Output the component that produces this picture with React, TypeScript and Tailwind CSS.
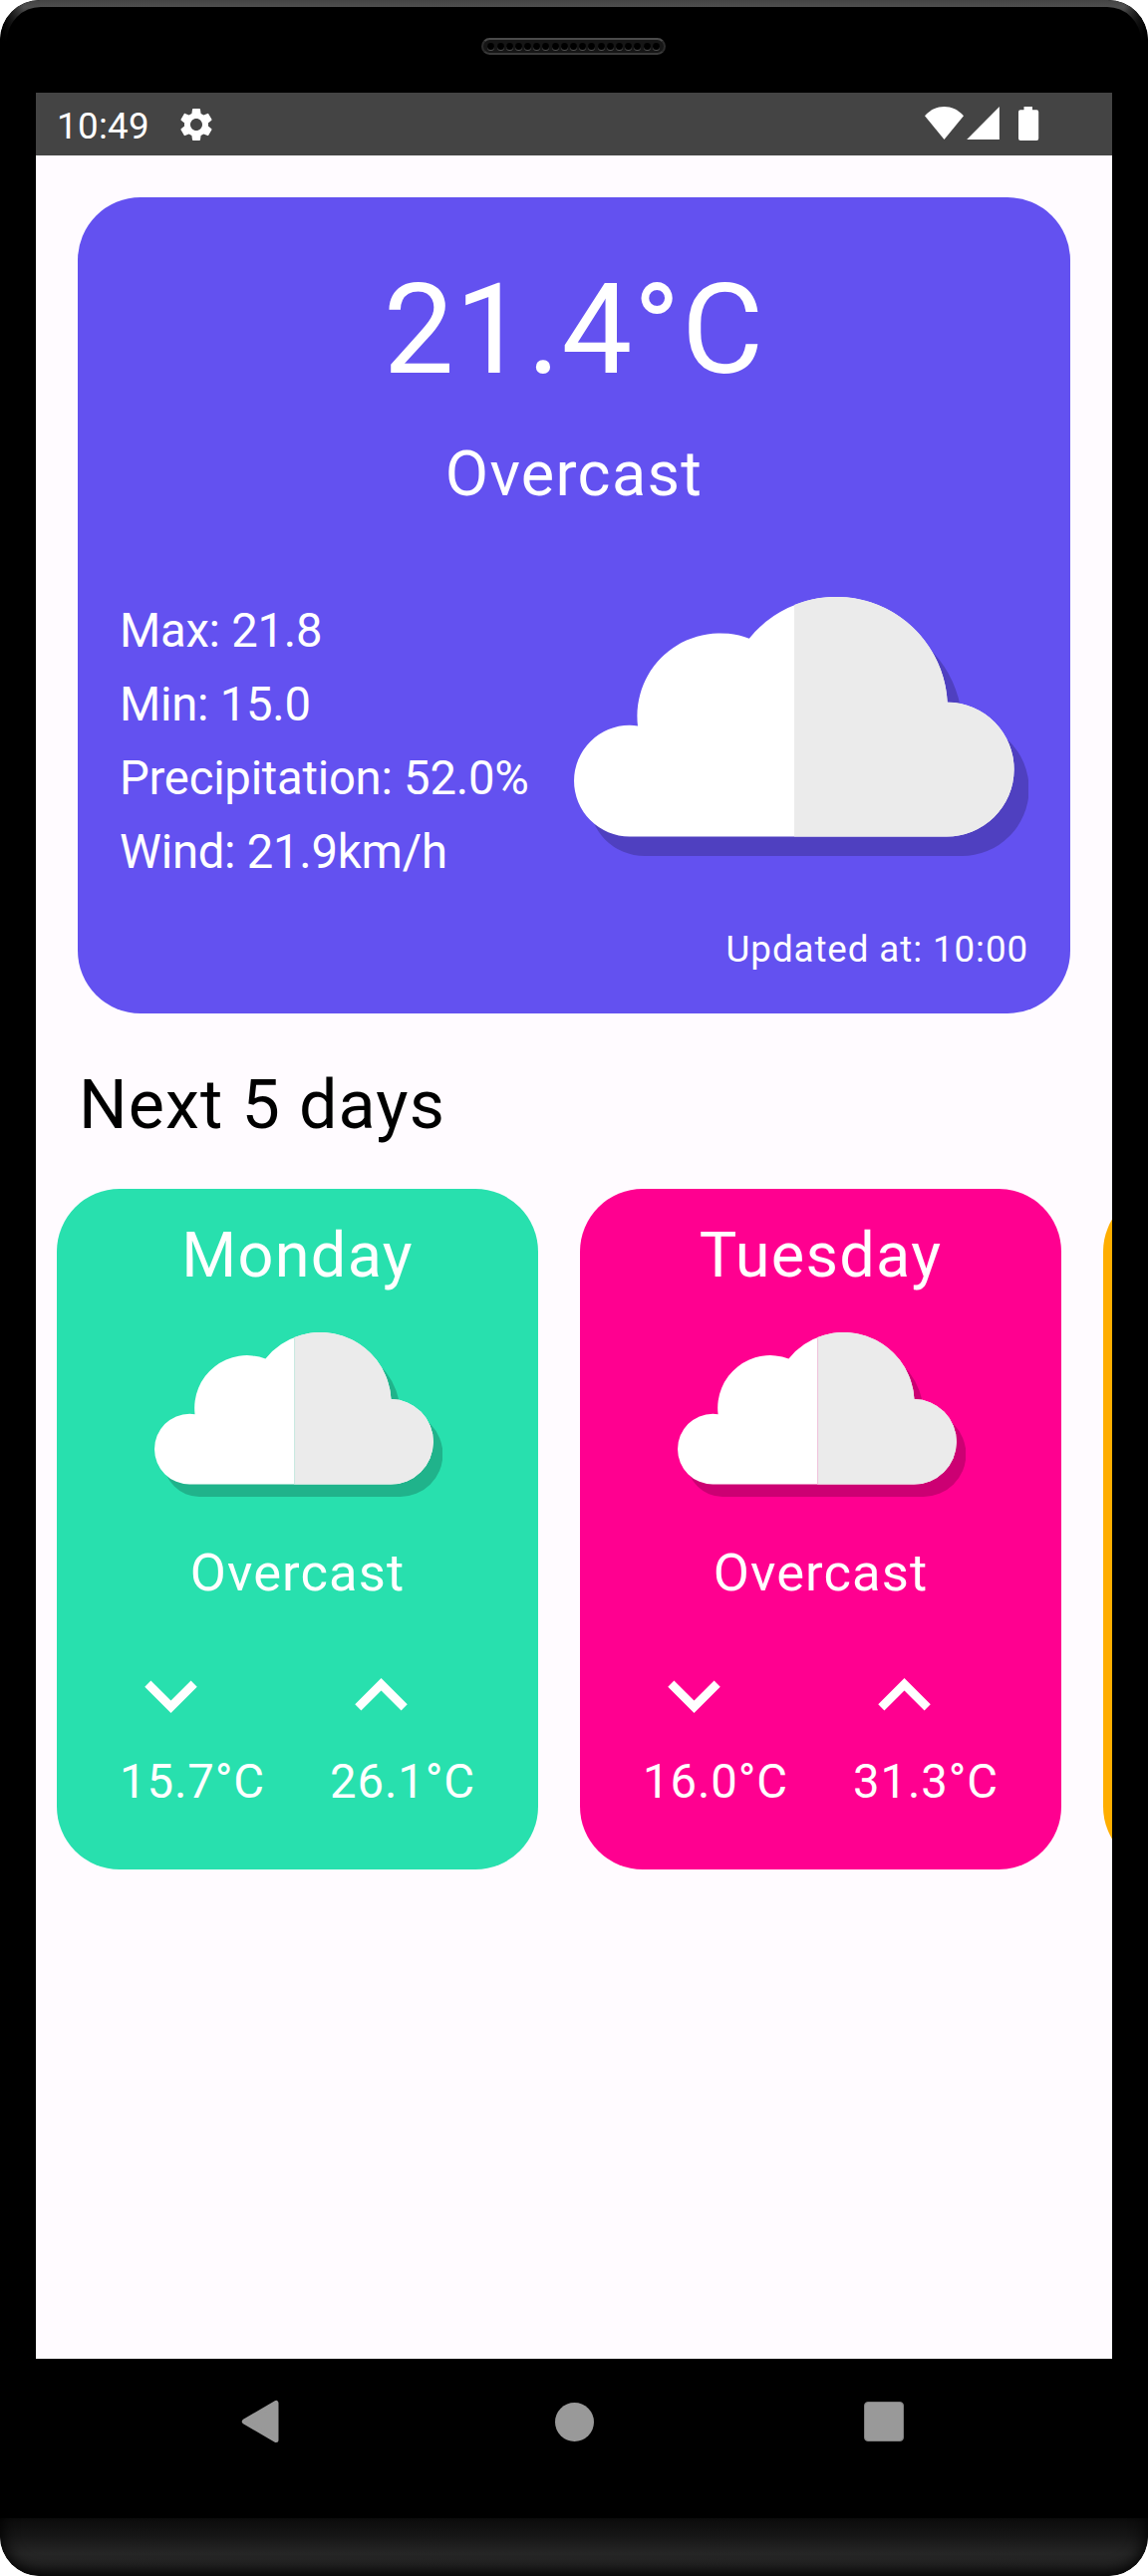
import { MdKeyboardArrowDown, MdKeyboardArrowUp, MdSettings } from "react-icons/md";

type Day = { name: string; sky: string; min: string; max: string; bg: string };

const days: Day[] = [
  { name: "Monday", sky: "Overcast", min: "15.7°C", max: "26.1°C", bg: "bg-[#28e0ae] text-[#28e0ae]" },
  { name: "Tuesday", sky: "Overcast", min: "16.0°C", max: "31.3°C", bg: "bg-[#ff0090] text-[#ff0090]" },
];

const details = ["Max: 21.8", "Min: 15.0", "Precipitation: 52.0%", "Wind: 21.9km/h"];

const CLOUD =
  "M55.8 240.4A55.8 55.8 0 0 1 55.8 128.8Q60 128.8 64 129.6A83.2 83.2 0 0 1 175.8 41.7A111.9 111.9 0 0 1 374.7 105.7A67.3 67.3 0 0 1 373.8 240.4Z";
const CLOUD_RIGHT =
  "M221 240.4V8A111.9 111.9 0 0 1 374.7 105.7A67.3 67.3 0 0 1 373.8 240.4Z";

function Cloud({ className, seam = false }: { className: string; seam?: boolean }) {
  return (
    <svg viewBox="0 0 456 260" preserveAspectRatio="none" className={className}>
      <path d={CLOUD} transform="translate(15 19.6)" fill="#000" fillOpacity=".2" />
      <path d={CLOUD} fill="#fff" />
      <path d={CLOUD_RIGHT} fill="#ebebeb" />
      {seam && <path d="M221 9h1.6v231h-1.6z" fill="currentColor" fillOpacity=".18" />}
    </svg>
  );
}

function Speaker() {
  return (
    <div className="mr-px flex h-[17px] w-[185px] items-center justify-center gap-[2.2px] rounded-full border-2 border-t-[#4a4a4a] border-r-[#2c2c2c] border-b-[#3a3a3a] border-l-[#2c2c2c] bg-[#161616]">
      {Array.from({ length: 19 }, (_, i) => (
        <span key={i} className="size-[7px] shrink-0 rounded-full bg-black shadow-[0_1px_0_#505050]" />
      ))}
    </div>
  );
}

function StatusBar() {
  return (
    <div className="flex h-[63px] items-center bg-[#444] pl-[21px] text-white">
      <span className="w-[120px] pt-[3px] text-[36.75px] leading-[43px] tracking-[0.3px]">10:49</span>
      <MdSettings className="size-[40px]" />
      <svg viewBox="0 0 115 35" className="mr-[73px] ml-auto h-[35px] w-[115px]" fill="currentColor">
        <path d="M19.5 33L0 9.3C11-3 28-3 39 9.3Z" />
        <path d="M42.2 33L74.9 0V33Z" />
        <path d="M99.5 0h8.500v3.300h4.200a2 2 0 0 1 2 2V32a2 2 0 0 1-2 2H96a2 2 0 0 1-2-2V5.300a2 2 0 0 1 2-2h3.500z" />
      </svg>
    </div>
  );
}

function DayCard({ day }: { day: Day }) {
  return (
    <article className={`flex h-[683px] w-[483px] shrink-0 flex-col items-center rounded-[63px] pt-[30px] ${day.bg}`}>
      <h3 className="text-[63px] leading-[73px] tracking-[1.3125px] text-white">{day.name}</h3>
      <Cloud className="mt-[41px] ml-[2px] h-[165px] w-[289px]" seam />
      <p className="mt-[45px] text-[52.5px] leading-[62px] tracking-[1.1px] text-white">{day.sky}</p>
      <div className="mt-[40px] flex gap-[63px] text-[47.25px] leading-[56px] tracking-[0.9px] text-white">
        <div className="w-[148px]">
          <MdKeyboardArrowDown className="mb-[6px] size-[105px]" />
          <p className="pl-px">{day.min}</p>
        </div>
        <div className="w-[148px]">
          <MdKeyboardArrowUp className="mb-[6px] size-[105px]" />
          <p className="pl-px">{day.max}</p>
        </div>
      </div>
    </article>
  );
}

export default function App() {
  return (
    <div className="h-[2585px] w-[1152px] bg-white font-['Roboto',sans-serif]">
      <div className="flex h-full flex-col overflow-hidden rounded-[40px] bg-black">
        <div className="h-[93px] shrink-0 rounded-t-[40px] bg-[linear-gradient(90deg,#000_2px,transparent_24px,transparent_1128px,#000_1150px),linear-gradient(#444,#4e4e4e_7px,#000_42px)] pt-[7px]">
          <div className="mx-[7px] flex h-full justify-center rounded-t-[34px] bg-black pt-[31px]">
            <Speaker />
          </div>
        </div>

        <div className="mx-[36px] flex h-[2274px] shrink-0 flex-col overflow-hidden bg-[#fffbff]">
          <StatusBar />
          <section className="mx-[42px] mt-[42px] h-[819px] rounded-[63px] bg-[#6351f0] px-[42px] pt-[49px] text-white">
            <h1 className="text-center text-[126px] leading-[168px] tracking-[1.3125px]">21.4°C</h1>
            <p className="mt-[19px] text-center text-[63px] leading-[84px] tracking-[1.3125px]">Overcast</p>
            <div className="mt-[78px] flex justify-between">
              <ul className="text-[47.25px] leading-[74px] tracking-[-0.26px] whitespace-nowrap">
                {details.map((d) => (
                  <li key={d}>{d}</li>
                ))}
              </ul>
              <Cloud className="mt-[3px] h-[260px] w-[456px] shrink-0" />
            </div>
            <p className="mt-[39px] text-right text-[36.75px] leading-[43px] tracking-[0.9px]">Updated at: 10:00</p>
          </section>

          <h2 className="mt-[52px] pl-[43px] text-[68.25px] leading-[80px] tracking-[1.1px] text-black">Next 5 days</h2>
          <div className="mt-[44px] flex gap-[42px] pl-[21px]">
            {days.map((d) => (
              <DayCard key={d.name} day={d} />
            ))}
            <div className="h-[683px] w-[483px] shrink-0 rounded-[63px] bg-[#ffae00]" />
          </div>
        </div>

        <nav className="mx-[36px] grid h-[126px] shrink-0 grid-cols-[453px_174px_453px] items-center">
          <svg viewBox="0 0 38 44" className="ml-[206px] h-[44px] w-[38px]" fill="#999" stroke="#999" strokeWidth="5" strokeLinejoin="round">
            <path d="M3.300 22L35 3.400V40.600Z" />
          </svg>
          <span className="mx-auto size-[39px] rounded-full bg-[#999]" />
          <span className="ml-[204px] size-[40px] rounded-[4px] border border-[#808080] bg-[#999]" />
        </nav>
        <div className="h-[34px] shrink-0" />
        <div className="flex h-[58px] shrink-0 items-end overflow-hidden rounded-b-[40px]">
          <div className="h-[88px] w-full shrink-0 rounded-b-[40px] bg-[linear-gradient(#0b0b0b_30px,#161616_48px,#262626_66px,#232323_76px,#181818)] shadow-[inset_0_0_16px_2px_#000]" />
        </div>
      </div>
    </div>
  );
}
